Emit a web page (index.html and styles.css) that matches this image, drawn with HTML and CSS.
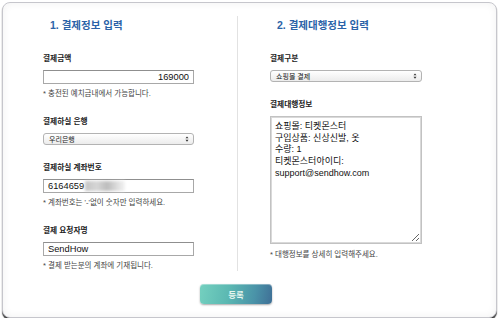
FILE: index.html
```html
<!DOCTYPE html>
<html lang="ko">
<head>
<meta charset="utf-8">
<title>결제정보 입력</title>
<link rel="stylesheet" href="styles.css">
</head>
<body>
<div class="card">
  <div class="cols">
    <section class="col col-left">
      <h2 class="title">1. 결제정보 입력</h2>
      <div class="field">
        <div class="label">결제금액</div>
        <input class="box box-right" type="text" value="169000" readonly>
        <p class="note">* 충전된 예치금내에서 가능합니다.</p>
      </div>
      <div class="field">
        <div class="label">결제하실 은행</div>
        <div class="select"><span>우리은행</span>
          <svg class="arrows" width="5" height="8" viewBox="0 0 5 8"><path d="M2.5 0.5 L4.5 3 L0.5 3 Z M2.5 7.5 L4.5 5 L0.5 5 Z" fill="#333"/></svg>
        </div>
      </div>
      <div class="field">
        <div class="label">결제하실 계좌번호</div>
        <div class="masked">
          <input class="box" type="text" value="6164659" readonly>
          <span class="blur"></span>
        </div>
        <p class="note">* 계좌번호는 '-'없이 숫자만 입력하세요.</p>
      </div>
      <div class="field">
        <div class="label">결제 요청자명</div>
        <input class="box" type="text" value="SendHow" readonly>
        <p class="note">* 결제 받는분의 계좌에 기재됩니다.</p>
      </div>
    </section>
    <section class="col col-right">
      <h2 class="title">2. 결제대행정보 입력</h2>
      <div class="field">
        <div class="label">결제구분</div>
        <div class="select select-wide"><span>쇼핑몰 결제</span>
          <svg class="arrows" width="5" height="8" viewBox="0 0 5 8"><path d="M2.5 0.5 L4.5 3 L0.5 3 Z M2.5 7.5 L4.5 5 L0.5 5 Z" fill="#333"/></svg>
        </div>
      </div>
      <div class="field">
        <div class="label">결제대행정보</div>
        <textarea class="area" readonly>쇼핑몰: 티켓몬스터
구입상품: 신상신발, 옷
수량: 1
티켓몬스터아이디:
support@sendhow.com</textarea>
        <p class="note">* 대행정보를 상세히 입력해주세요.</p>
      </div>
    </section>
  </div>
  <div class="actions">
    <button class="btn" type="button">등록</button>
  </div>
</div>
</body>
</html>
```

FILE: styles.css
```css
* { box-sizing: border-box; }

html, body {
  margin: 0;
  padding: 0;
  background: #ffffff;
}

body {
  padding: 2px 0 0 2px;
  font-family: "Liberation Sans", "Noto Sans CJK KR", sans-serif;
  color: #222;
}

.card {
  width: 495px;
  height: 316px;
  border: 1px solid #c6c6cc;
  border-radius: 8px;
  background: #fff;
  box-shadow: inset 0 0 8px rgba(0, 0, 0, 0.06), 0 2px 1px rgba(0, 0, 0, 0.75);
  padding-top: 13px;
}

.cols {
  display: flex;
  height: 255px;
}

.col {
  padding-top: 2px;
}

.col-left {
  width: 234px;
  padding-left: 40px;
}

.col-right {
  border-left: 1px solid #e2e2e2;
  padding-left: 32px;
}

.title {
  margin: 0;
  font-size: 10.5px;
  line-height: 14px;
  font-weight: bold;
  color: #2b63a8;
  padding-left: 7px;
}

.col-right .title {
  padding-left: 7px;
}

.field {
  margin-top: 18px;
}

.field:first-of-type {
  margin-top: 22px;
}

.label {
  font-size: 7.7px;
  line-height: 10px;
  font-weight: bold;
  color: #222;
  margin-bottom: 6px;
}

.box {
  display: block;
  width: 151px;
  height: 14px;
  margin: 0;
  border: 1px solid #a8a8a8;
  border-top-color: #8f8f8f;
  background: #fff;
  padding: 0 4px;
  font-family: "Liberation Sans", "Noto Sans CJK KR", sans-serif;
  font-size: 9.3px;
  color: #111;
  outline: none;
}

.box-right {
  text-align: right;
  padding-right: 4px;
}

.masked {
  position: relative;
  width: 151px;
}

.blur {
  position: absolute;
  left: 42px;
  top: 2px;
  width: 40px;
  height: 10px;
  background: linear-gradient(90deg, #c4c4c4 0%, #d6d6d6 30%, #bcbcbc 55%, #dcdcdc 80%, #f4f4f4 100%);
  filter: blur(1.5px);
}

.select {
  display: flex;
  align-items: center;
  justify-content: space-between;
  width: 151px;
  height: 12px;
  border: 1px solid #b3b3b3;
  border-radius: 3px;
  background: linear-gradient(#ffffff, #ececec);
  padding: 0 4px 0 5px;
  font-size: 7px;
  color: #222;
}

.select-wide {
  width: 152px;
}

.arrows {
  display: block;
  width: 4px;
  height: 6px;
}

.note {
  margin: 5px 0 0;
  font-size: 7.5px;
  line-height: 10px;
  color: #444;
}

.area {
  display: block;
  width: 152px;
  height: 128px;
  margin: 0;
  border: 2px solid #d9d9d9;
  outline: 1px solid #c2c2c2;
  outline-offset: -1px;
  padding: 3px 3px;
  font-family: "Liberation Sans", "Noto Sans CJK KR", sans-serif;
  font-size: 9px;
  line-height: 11.7px;
  color: #111;
  resize: both;
  overflow: hidden;
}

.col-right .note {
  margin-top: 6px;
}

.actions {
  padding: 13px 0 0 197px;
}

.btn {
  display: block;
  width: 72px;
  height: 20px;
  border: 0;
  border-radius: 4px;
  background: linear-gradient(100deg, #74d0bf 0%, #5bb8b2 40%, #4a93a8 75%, #3f6f96 100%);
  box-shadow: inset 0 1px 0 rgba(255, 255, 255, 0.35), 0 1px 2px rgba(0, 0, 0, 0.35);
  font-family: "Liberation Sans", "Noto Sans CJK KR", sans-serif;
  font-size: 8.5px;
  font-weight: bold;
  color: #e6f6ef;
  padding: 0;
}
```
